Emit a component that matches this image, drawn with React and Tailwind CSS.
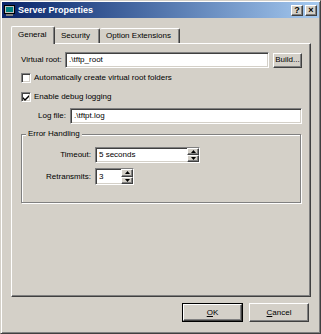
const raised =
  "bg-[#d4d0c8] border border-t-white border-l-white border-r-[#404040] border-b-[#404040] shadow-[inset_-1px_-1px_0_#808080]";
const sunken =
  "bg-white border border-t-[#808080] border-l-[#808080] border-r-white border-b-white shadow-[inset_1px_1px_0_#404040,inset_-1px_-1px_0_#d4d0c8]";

function Checkbox({ checked }) {
  return (
    <div className={`w-[10px] h-[10px] flex items-center justify-center ${sunken}`}>
      {checked && (
        <svg width="7" height="7" viewBox="0 0 7 7">
          <path d="M0 3 L2 5 L6 1 L6 3 L2 7 L0 5 Z" fill="#000" />
        </svg>
      )}
    </div>
  );
}

function Spinner() {
  return (
    <div className="flex flex-col w-[12px] h-full">
      <div className={`flex-1 flex items-center justify-center ${raised}`}>
        <svg width="5" height="3" viewBox="0 0 5 3">
          <path d="M2.5 0 L5 3 H0 Z" fill="#000" />
        </svg>
      </div>
      <div className={`flex-1 flex items-center justify-center ${raised}`}>
        <svg width="5" height="3" viewBox="0 0 5 3">
          <path d="M0 0 H5 L2.5 3 Z" fill="#000" />
        </svg>
      </div>
    </div>
  );
}

function TitleButton({ children }) {
  return (
    <div className={`w-[12px] h-[11px] flex items-center justify-center text-[9px] font-bold leading-none ${raised}`}>
      {children}
    </div>
  );
}

export default function App() {
  return (
    <div className="w-[321px] h-[334px] bg-[#d4d0c8] font-['Liberation_Sans',Arial,sans-serif] text-[8px] leading-none text-black border border-t-[#d4d0c8] border-l-[#d4d0c8] border-r-[#404040] border-b-[#404040] shadow-[inset_1px_1px_0_#fff,inset_-1px_-1px_0_#808080] p-[1px] flex flex-col">
      {/* Title bar */}
      <div className="h-[16px] flex items-center bg-gradient-to-r from-[#0a246a] to-[#a6caf0] px-[2px]">
        <svg width="11" height="11" viewBox="0 0 11 11">
          <rect x="0.5" y="0.5" width="10" height="8" fill="#c0c0c0" stroke="#000" />
          <rect x="2" y="2" width="7" height="5" fill="#008080" />
          <rect x="2" y="9" width="7" height="2" fill="#808080" />
        </svg>
        <span className="ml-[3px] text-white font-bold text-[9px]">Server Properties</span>
        <div className="ml-auto flex gap-[2px]">
          <TitleButton>?</TitleButton>
          <TitleButton>×</TitleButton>
        </div>
      </div>

      <div className="mt-[8px] ml-[9px] mr-[8px] flex flex-col">
        {/* Tabs */}
        <div className="h-[18px] flex items-end relative z-10">
          <div className="w-[44px] h-[18px] bg-[#d4d0c8] border-t border-l border-t-white border-l-white border-r border-r-[#404040] shadow-[inset_-1px_0_0_#808080] rounded-t-[2px] flex items-center pl-[6px] pb-[1px]">
            General
          </div>
          <div className="w-[45px] h-[15px] mb-[1px] bg-[#d4d0c8] border-t border-t-white border-r border-r-[#404040] shadow-[inset_-1px_0_0_#808080] rounded-t-[2px] flex items-center pl-[6px]">
            Security
          </div>
          <div className="w-[80px] h-[15px] mb-[1px] bg-[#d4d0c8] border-t border-t-white border-r border-r-[#404040] shadow-[inset_-1px_0_0_#808080] rounded-t-[2px] flex items-center pl-[6px]">
            Option Extensions
          </div>
        </div>

        {/* Tab panel */}
        <div className="h-[254px] -mt-[1px] border border-t-white border-l-white border-r-[#404040] border-b-[#404040] shadow-[inset_-1px_-1px_0_#808080] pl-[9px] pr-[8px] flex flex-col">
          <div className="mt-[8px] h-[16px] flex items-center">
            <span className="w-[44px]">Virtual root:</span>
            <div className={`flex-1 h-full flex items-center pl-[3px] ${sunken}`}>.\tftp_root</div>
            <div className={`ml-[4px] w-[29px] h-[15px] flex items-center justify-center ${raised}`}>Build...</div>
          </div>

          <div className="mt-[4px] h-[12px] flex items-center">
            <Checkbox />
            <span className="ml-[3px]">Automatically create virtual root folders</span>
          </div>

          <div className="mt-[7px] h-[12px] flex items-center">
            <Checkbox checked />
            <span className="ml-[3px]">Enable debug logging</span>
          </div>

          <div className="mt-[5px] h-[16px] flex items-center">
            <span className="ml-[17px] w-[32px]">Log file:</span>
            <div className={`flex-1 h-full flex items-center pl-[3px] ${sunken}`}>.\tftpt.log</div>
          </div>

          {/* Error Handling group */}
          <div className="relative mt-[10px] mr-[1px] h-[69px] border border-[#808080] shadow-[inset_1px_1px_0_#fff,1px_1px_0_#fff] flex flex-col">
            <span className="absolute left-[4px] -top-[5px] px-[2px] bg-[#d4d0c8]">Error Handling</span>
            <div className="mt-[12px] h-[16px] flex items-center">
              <span className="w-[69px] text-right">Timeout:</span>
              <div className={`ml-[4px] w-[105px] h-full flex items-center ${sunken}`}>
                <span className="flex-1 pl-[3px]">5 seconds</span>
                <Spinner />
              </div>
            </div>
            <div className="mt-[5px] h-[17px] flex items-center">
              <span className="w-[69px] text-right">Retransmits:</span>
              <div className={`ml-[4px] w-[39px] h-full flex items-center ${sunken}`}>
                <span className="flex-1 pl-[3px]">3</span>
                <Spinner />
              </div>
            </div>
          </div>
        </div>
      </div>

      {/* Dialog buttons */}
      <div className="mt-[6px] pr-[10px] flex justify-end gap-[6px]">
        <div className="w-[61px] h-[19px] border border-black">
          <div className={`w-full h-full flex items-center justify-center ${raised}`}>
            <span><span className="underline">O</span>K</span>
          </div>
        </div>
        <div className={`w-[60px] h-[19px] flex items-center justify-center ${raised}`}>
          <span><span className="underline">C</span>ancel</span>
        </div>
      </div>
    </div>
  );
}
